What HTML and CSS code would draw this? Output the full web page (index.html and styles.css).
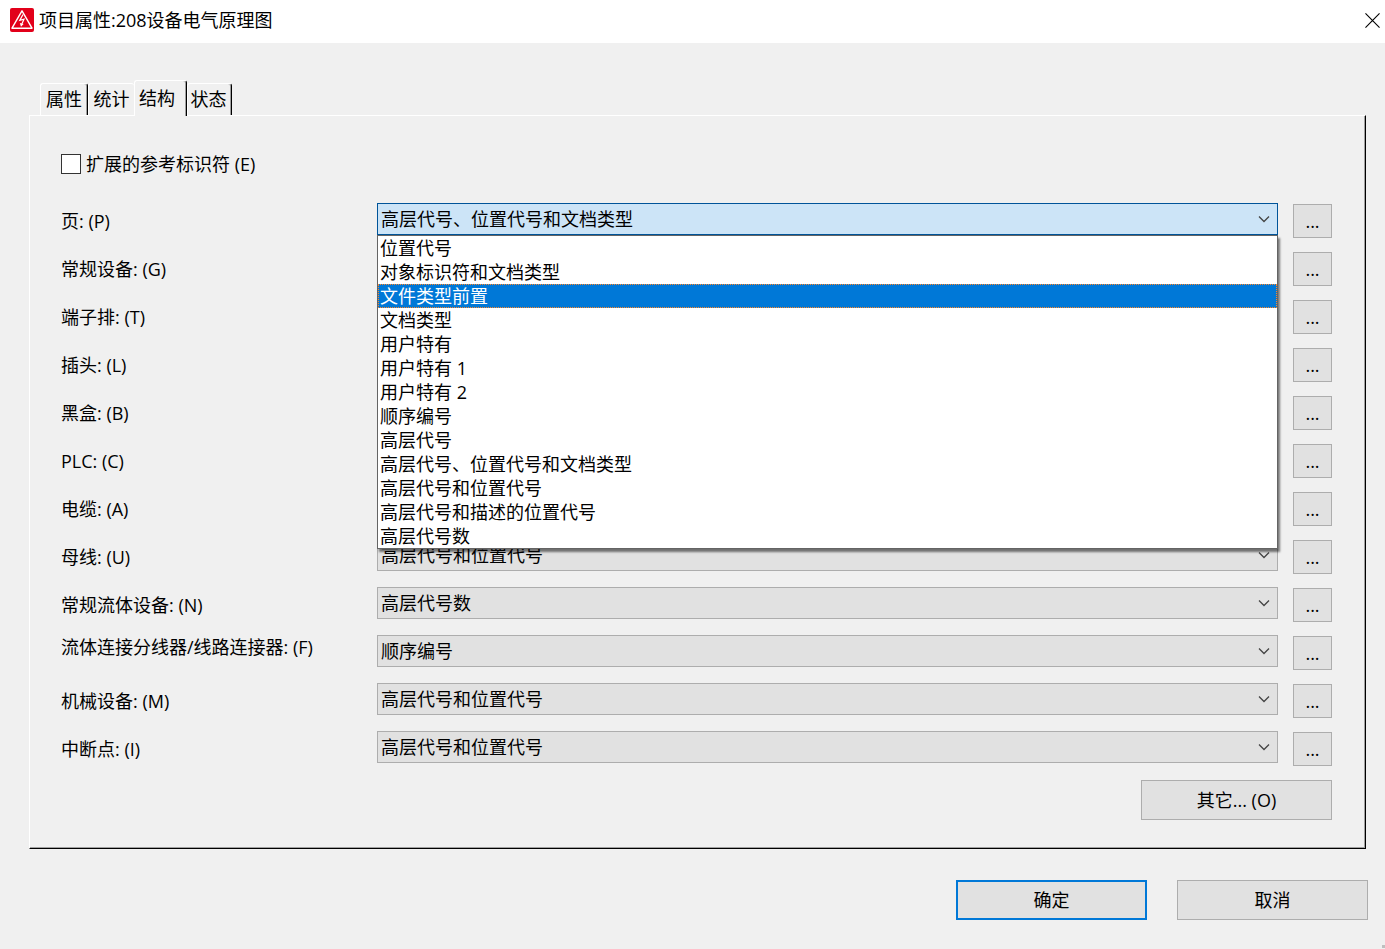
FILE: index.html
```html
<!DOCTYPE html>
<html lang="zh-CN">
<head>
    <meta charset="UTF-8">
    <title>项目属性</title>
    <link rel="stylesheet" href="styles.css">
</head>
<body>
    <svg width="0" height="0" class="defs">
        <symbol id="chevron" viewBox="0 0 12 8">
            <path d="M1 1.5 L6 6.5 L11 1.5" fill="none" stroke="#444" stroke-width="1.3"/>
        </symbol>
    </svg>
    <header class="titlebar">
        <svg class="logo" viewBox="0 0 24 24">
            <rect width="24" height="24" rx="2" fill="#e2001a"/>
            <path d="M12 2.8 L22 20.2 H2 Z" fill="none" stroke="#fff" stroke-width="1.4" stroke-linejoin="round"/>
            <path d="M13 6.5 L9.8 12.4 L14 11.2 L11.4 17" fill="none" stroke="#fff" stroke-width="1.2"/>
            <path d="M9.8 15 L11 18.8 L13.6 16 Z" fill="#fff"/>
        </svg>
        <h1>项目属性:208设备电气原理图</h1>
        <button class="close" aria-label="关闭">
            <svg viewBox="0 0 16 16"><path d="M0.5 0.5 L15.5 15.5 M15.5 0.5 L0.5 15.5" stroke="#000" stroke-width="1.2"/></svg>
        </button>
    </header>
    <main>
        <div class="tabs" role="tablist">
            <button class="tab" role="tab">属性</button>
            <button class="tab" role="tab">统计</button>
            <button class="tab active" role="tab" aria-selected="true">结构</button>
            <button class="tab" role="tab">状态</button>
        </div>
        <section class="panel">
            <div class="check">
                <input type="checkbox" id="extended">
                <label for="extended">扩展的参考标识符 (E)</label>
            </div>
            <div class="row">
                <label for="page">页: (P)</label>
                <div class="combo open">
                    <select id="page"><option>高层代号、位置代号和文档类型</option></select>
                    <svg class="arrow"><use href="#chevron"/></svg>
                    <ul class="list" role="listbox">
                        <li role="option">位置代号</li>
                        <li role="option">对象标识符和文档类型</li>
                        <li role="option" class="selected" aria-selected="true">文件类型前置</li>
                        <li role="option">文档类型</li>
                        <li role="option">用户特有</li>
                        <li role="option">用户特有 1</li>
                        <li role="option">用户特有 2</li>
                        <li role="option">顺序编号</li>
                        <li role="option">高层代号</li>
                        <li role="option">高层代号、位置代号和文档类型</li>
                        <li role="option">高层代号和位置代号</li>
                        <li role="option">高层代号和描述的位置代号</li>
                        <li role="option">高层代号数</li>
                    </ul>
                </div>
                <button class="more">...</button>
            </div>
            <div class="row">
                <label for="device">常规设备: (G)</label>
                <div class="combo">
                    <select id="device"></select>
                </div>
                <button class="more">...</button>
            </div>
            <div class="row">
                <label for="terminal">端子排: (T)</label>
                <div class="combo">
                    <select id="terminal"></select>
                </div>
                <button class="more">...</button>
            </div>
            <div class="row">
                <label for="plug">插头: (L)</label>
                <div class="combo">
                    <select id="plug"></select>
                </div>
                <button class="more">...</button>
            </div>
            <div class="row">
                <label for="blackbox">黑盒: (B)</label>
                <div class="combo">
                    <select id="blackbox"></select>
                </div>
                <button class="more">...</button>
            </div>
            <div class="row">
                <label for="plc">PLC: (C)</label>
                <div class="combo">
                    <select id="plc"></select>
                </div>
                <button class="more">...</button>
            </div>
            <div class="row">
                <label for="cable">电缆: (A)</label>
                <div class="combo">
                    <select id="cable"></select>
                </div>
                <button class="more">...</button>
            </div>
            <div class="row">
                <label for="busbar">母线: (U)</label>
                <div class="combo">
                    <select id="busbar"><option>高层代号和位置代号</option></select>
                    <svg class="arrow"><use href="#chevron"/></svg>
                </div>
                <button class="more">...</button>
            </div>
            <div class="row">
                <label for="fluid">常规流体设备: (N)</label>
                <div class="combo">
                    <select id="fluid"><option>高层代号数</option></select>
                    <svg class="arrow"><use href="#chevron"/></svg>
                </div>
                <button class="more">...</button>
            </div>
            <div class="row">
                <label for="splitter" class="long">流体连接分线器/线路连接器: (F)</label>
                <div class="combo">
                    <select id="splitter"><option>顺序编号</option></select>
                    <svg class="arrow"><use href="#chevron"/></svg>
                </div>
                <button class="more">...</button>
            </div>
            <div class="row">
                <label for="mechanic">机械设备: (M)</label>
                <div class="combo">
                    <select id="mechanic"><option>高层代号和位置代号</option></select>
                    <svg class="arrow"><use href="#chevron"/></svg>
                </div>
                <button class="more">...</button>
            </div>
            <div class="row">
                <label for="break">中断点: (I)</label>
                <div class="combo">
                    <select id="break"><option>高层代号和位置代号</option></select>
                    <svg class="arrow"><use href="#chevron"/></svg>
                </div>
                <button class="more">...</button>
            </div>
            <div class="other">
                <button class="btn">其它... (O)</button>
            </div>
        </section>
    </main>
    <footer>
        <button class="btn primary">确定</button>
        <button class="btn">取消</button>
    </footer>
    <span class="grip"></span>
</body>
</html>
```
FILE: styles.css
```css
* {
    box-sizing: border-box;
}
body {
    margin: 0;
    background: #f0f0f0;
    color: #000;
    font-family: "Open Sans", "Noto Sans CJK SC", sans-serif;
    font-size: 18px;
    line-height: 24px;
}
button, select, input {
    font: inherit;
    color: inherit;
    margin: 0;
    padding: 0;
    border-radius: 0;
}
.defs {
    position: absolute;
}
.titlebar {
    display: flex;
    align-items: center;
    height: 43px;
    padding: 0 5px 3px 10px;
    background: #fff;
}
.logo {
    width: 24px;
    height: 24px;
    margin-right: 5px;
}
.titlebar h1 {
    margin: 0;
    flex: 1;
    font-size: 18px;
    font-weight: normal;
}
.close {
    display: flex;
    border: none;
    background: none;
}
.close svg {
    width: 15px;
    height: 15px;
}
main {
    padding: 37px 19px 0 29px;
}
.tabs {
    display: flex;
    align-items: flex-end;
    padding-left: 11px;
}
.tab {
    width: 48px;
    height: 32px;
    padding-bottom: 1px;
    border: 1px solid #fff;
    border-right-color: #000;
    border-bottom: none;
    border-radius: 3px 3px 0 0;
    background: #f0f0f0;
    box-shadow: inset -1px 0 #a0a0a0;
}
.tab:nth-child(2) {
    width: 46px;
    border-right: none;
    box-shadow: none;
}
.tab.active {
    position: relative;
    width: 53px;
    height: 36px;
    margin-bottom: -1px;
    padding: 0 7px 2px 0;
}
.tab:last-child {
    width: 45px;
    padding-right: 2px;
}
.panel {
    padding: 36px 33px 28px 31px;
    border: 1px solid #fff;
    border-right-color: #000;
    border-bottom-color: #000;
    box-shadow: inset -1px -1px #a0a0a0;
}
.check {
    display: flex;
    align-items: center;
    gap: 5px;
    margin-bottom: 27px;
}
.check input {
    appearance: none;
    width: 20px;
    height: 20px;
    border: 1px solid #333;
    background: #fff;
}
.row {
    display: grid;
    grid-template-columns: 301px 1fr 39px;
    column-gap: 15px;
    align-items: start;
    height: 48px;
}
.row label {
    line-height: 36px;
    white-space: nowrap;
}
.row .long {
    line-height: 24px;
}
.combo {
    position: relative;
}
.combo select {
    display: block;
    appearance: none;
    width: 100%;
    height: 32px;
    padding: 0 3px;
    border: 1px solid #adadad;
    background: #e1e1e1;
}
.combo.open select {
    border-color: #005499;
    background: #cce4f7;
}
.arrow {
    position: absolute;
    top: 12px;
    right: 8px;
    width: 12px;
    height: 8px;
    pointer-events: none;
}
.list {
    position: absolute;
    z-index: 1;
    top: 32px;
    left: 0;
    right: 0;
    margin: 0;
    padding: 0;
    list-style: none;
    background: #fff;
    border: 1px solid #646464;
    box-shadow: 2px 3px 2px rgba(0, 0, 0, 0.5);
}
.list li {
    height: 24px;
    padding-left: 2px;
}
.list .selected {
    background: #0078d7;
    color: #fff;
    outline: 1px dotted #ff8728;
    outline-offset: -1px;
}
.more {
    height: 34px;
    margin-top: 1px;
    border: 1px solid #adadad;
    background: #e1e1e1;
}
.other {
    display: flex;
    justify-content: flex-end;
    padding-top: 1px;
}
.btn {
    width: 191px;
    height: 40px;
    border: 1px solid #adadad;
    background: #e1e1e1;
}
.btn.primary {
    border: 2px solid #0078d7;
}
footer {
    display: flex;
    justify-content: flex-end;
    gap: 30px;
    padding: 31px 17px 29px;
}
.grip {
    position: absolute;
    right: 0;
    bottom: 1px;
    width: 3px;
    height: 3px;
    background: #bfbfbf;
}
```
